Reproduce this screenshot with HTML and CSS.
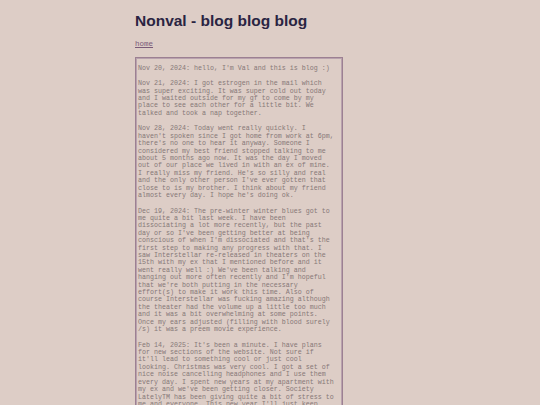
FILE: index.html
```html
<!DOCTYPE html>
<html>
<head>
<meta charset="utf-8">
<title>Nonval - blog blog blog</title>
<link rel="stylesheet" href="styles.css">
</head>
<body>
<div class="page">
  <h1 class="title">Nonval - blog blog blog</h1>
  <nav class="nav"><a href="#" class="nav-link">home</a></nav>
  <div class="blog">
    <p class="entry">Nov 20, 2024: hello, I'm Val and this is blog :)</p>
    <p class="entry">Nov 21, 2024: I got estrogen in the mail which was super exciting. It was super cold out today and I waited outside for my gf to come by my place to see each other for a little bit. We talked and took a nap together.</p>
    <p class="entry">Nov 28, 2024: Today went really quickly. I haven't spoken since I got home from work at 6pm, there's no one to hear it anyway. Someone I considered my best friend stopped talking to me about 5 months ago now. It was the day I moved out of our place we lived in with an ex of mine. I really miss my friend. He's so silly and real and the only other person I've ever gotten that close to is my brother. I think about my friend almost every day. I hope he's doing ok.</p>
    <p class="entry">Dec 19, 2024: The pre-winter winter blues got to me quite a bit last week. I have been dissociating a lot more recently, but the past day or so I've been getting better at being conscious of when I'm dissociated and that's the first step to making any progress with that. I saw Interstellar re-released in theaters on the 15th with my ex that I mentioned before and it went really well :) We've been talking and hanging out more often recently and I'm hopeful that we're both putting in the necessary effort(s) to make it work this time. Also of course Interstellar was fucking amazing although the theater had the volume up a little too much and it was a bit overwhelming at some points. Once my ears adjusted (filling with blood surely /s) it was a preem movie experience.</p>
    <p class="entry">Feb 14, 2025: It's been a minute. I have plans for new sections of the website. Not sure if it'll lead to something cool or just cool looking. Christmas was very cool. I got a set of nice noise cancelling headphones and I use them every day. I spent new years at my apartment with my ex and we've been getting closer. Society LatelyTM has been giving quite a bit of stress to me and everyone. This new year I'll just keep going and see what happens.</p>
  </div>
</div>
</body>
</html>
```
FILE: styles.css
```css
html, body {
  margin: 0;
  padding: 0;
  background: #ddcdc6;
}
.page {
  width: 270px;
  margin: 0 auto;
  padding-top: 12px;
}
.title {
  margin: 0;
  font-family: "Liberation Sans", Arial, sans-serif;
  font-weight: bold;
  font-size: 15.5px;
  line-height: 18px;
  color: #2a2442;
}
.nav {
  margin-top: 10px;
  font-family: "Liberation Mono", "Courier New", monospace;
  font-size: 7.5px;
  line-height: 8.5px;
}
.nav-link {
  color: #7a5a78;
  text-decoration: underline;
}
.blog {
  margin-top: 8px;
  width: 198px;
  padding: 0 7px 0 1px;
  border: 1px solid #9c8092;
  box-shadow: inset 0 0 0 1px #b9a2ae;
  font-family: "Liberation Mono", "Courier New", monospace;
  font-size: 6.67px;
  line-height: 7.4px;
  color: #867878;
}
.entry {
  margin: 8.2px 0 0 0;
  padding-left: 1px;
}
.entry:first-child {
  margin-top: 7px;
}
```
